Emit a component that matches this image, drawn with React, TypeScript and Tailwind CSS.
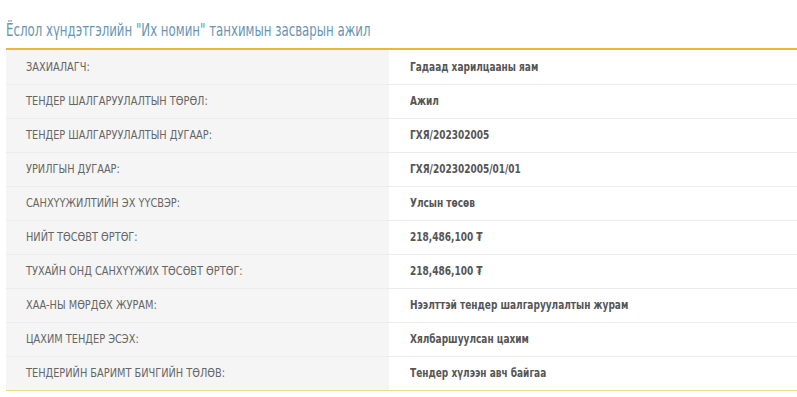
const rows: [string, string][] = [
  ["ЗАХИАЛАГЧ:", "Гадаад харилцааны яам"],
  ["ТЕНДЕР ШАЛГАРУУЛАЛТЫН ТӨРӨЛ:", "Ажил"],
  ["ТЕНДЕР ШАЛГАРУУЛАЛТЫН ДУГААР:", "ГХЯ/202302005"],
  ["УРИЛГЫН ДУГААР:", "ГХЯ/202302005/01/01"],
  ["САНХҮҮЖИЛТИЙН ЭХ ҮҮСВЭР:", "Улсын төсөв"],
  ["НИЙТ ТӨСӨВТ ӨРТӨГ:", "218,486,100 ₮"],
  ["ТУХАЙН ОНД САНХҮҮЖИХ ТӨСӨВТ ӨРТӨГ:", "218,486,100 ₮"],
  ["ХАА-НЫ МӨРДӨХ ЖУРАМ:", "Нээлттэй тендер шалгаруулалтын журам"],
  ["ЦАХИМ ТЕНДЕР ЭСЭХ:", "Хялбаршуулсан цахим"],
  ["ТЕНДЕРИЙН БАРИМТ БИЧГИЙН ТӨЛӨВ:", "Тендер хүлээн авч байгаа"],
];

export default function App() {
  return (
    <div className="w-[797px] h-[397px] bg-white pl-[6px] font-['DejaVu_Sans_Condensed','DejaVu_Sans',sans-serif]">
      <h1 className="pt-[19px] h-[48px] text-[17px] leading-[22px] text-[#6596b3]">
        <span className="inline-block origin-left scale-x-[0.77] whitespace-nowrap">
          Ёслол хүндэтгэлийн "Их номин" танхимын засварын ажил
        </span>
      </h1>
      <div className="h-[2px] bg-[#ecb731]" />
      {rows.map(([label, value], i) => (
        <div
          key={label}
          className={`grid grid-cols-[383px_1fr] h-[34px] ${i > 0 ? "border-t border-[#ececec]" : ""}`}
        >
          <div className="bg-[#f5f5f5] pl-[20px] flex items-center text-[12.5px] text-[#666]">
            <span className="inline-block origin-left scale-x-[0.87] whitespace-nowrap">{label}</span>
          </div>
          <div className="pl-[21px] flex items-center text-[12.5px] font-bold text-[#555]">
            <span className="inline-block origin-left scale-x-[0.8] whitespace-nowrap">{value}</span>
          </div>
        </div>
      ))}
      <div className="h-px bg-[#f0d98a]" />
    </div>
  );
}
